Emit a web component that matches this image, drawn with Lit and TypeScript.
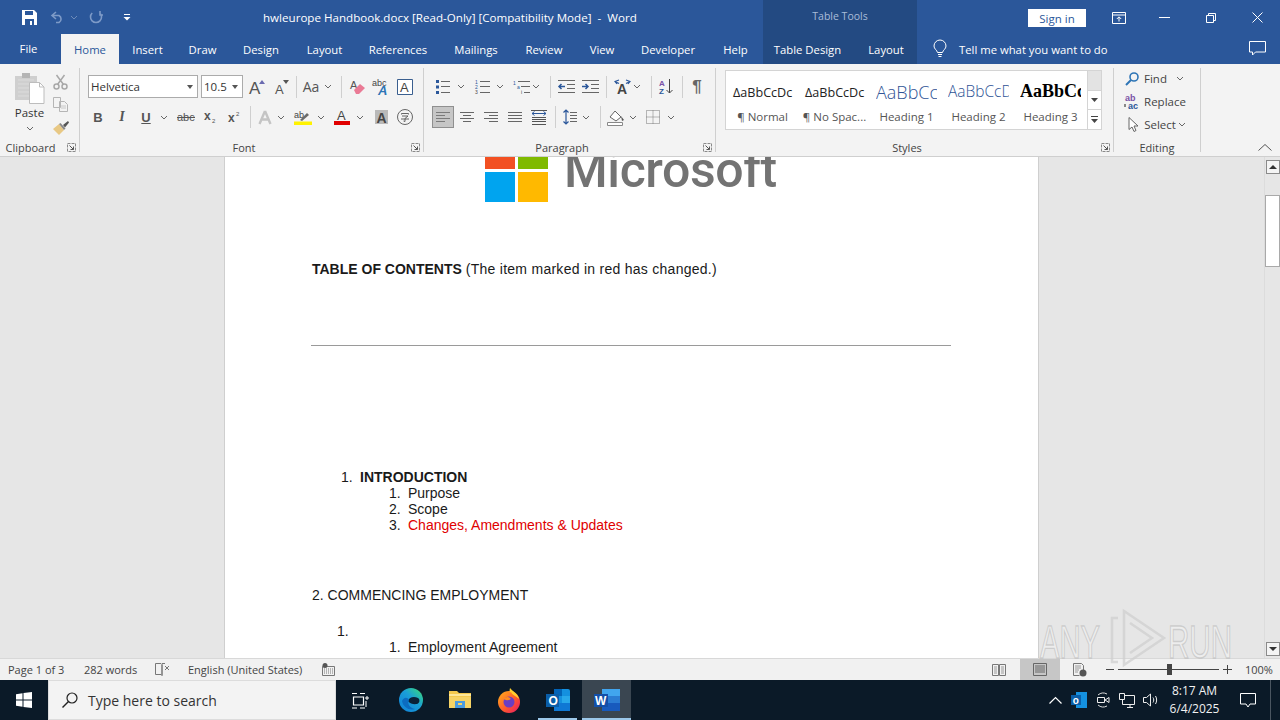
import { LitElement, html, css, svg } from 'lit'
import { customElement } from 'lit/decorators.js'

// small svg helpers, icons are drawn in pixel coordinates
const ic = (w: number, h: number, body: unknown) =>
  html`<svg width=${w} height=${h} viewBox="0 0 ${w} ${h}" fill="none">${body}</svg>`

const label = (x: number, y: number, text: string, size: number, fill: string, extra = '') =>
  svg`<text x=${x} y=${y} font-size=${size} fill=${fill} style=${extra} font-family="Liberation Sans, sans-serif">${text}</text>`

const chev = ic(8, 5, svg`<path d="M1 1l3 3 3-3" stroke="#666" stroke-width="1"/>`)
const chevDim = ic(8, 5, svg`<path d="M1 1l3 3 3-3" stroke="#6d8bb9" stroke-width="1"/>`)
const sep = html`<i class="vsep"></i>`

const hlines = (ys: [number, number, number][], color = '#666') =>
  ys.map(([x1, x2, y]) => svg`<path d="M${x1} ${y + 0.5}H${x2}" stroke=${color}/>`)

// paste a row of tools: each item gives its centre x, its width and its content
type Tool = [number, number, unknown]
const row = (x0: number, items: Tool[]) => {
  let x = x0
  return items.map(([cx, w, t]) => {
    const left = cx - w / 2
    const m = left - x
    x = left + w
    return html`<span class="t" style="width:${w}px;margin-left:${m}px">${t}</span>`
  })
}

const launcher = ic(9, 9, svg`<path d="M.5 .5h8v8h-8z" stroke="#8a8a8a" stroke-dasharray="3 1"/><path d="M2.5 2.5l4 4M6.5 3.5v3h-3" stroke="#555"/>`)

// title bar
const saveIcon = ic(15, 15, svg`<path d="M0 0h12l3 3v12H0z" fill="#fff"/><path d="M3 1h8v4H3zM3 9h9v6H3z" fill="#2b579a"/><path d="M8 11h2v4H8z" fill="#fff"/>`)
const undoIcon = ic(14, 12, svg`<path d="M5 1L1 4.5 5 8M1.5 4.5H8a4 4 0 0 1 0 7H5" stroke="#7d9ac7" stroke-width="1.6"/>`)
const redoIcon = ic(14, 14, svg`<path d="M3.2 3a5.5 5.5 0 1 0 7.600 0M11 1v4H14" stroke="#7d9ac7" stroke-width="1.6"/>`)
const qatIcon = ic(8, 8, svg`<path d="M1 1.500h6" stroke="#fff"/><path d="M.5 4h7L4 7.500z" fill="#fff"/>`)
const displayIcon = ic(14, 12, svg`<path d="M.5 .5h13v11H.5zM.5 3h13" stroke="#fff"/><path d="M7 9.500V5M4.800 7L7 4.800 9.200 7" stroke="#fff"/>`)
const minIcon = ic(11, 1, svg`<path d="M0 .5h11" stroke="#fff"/>`)
const restoreIcon = ic(10, 10, svg`<path d="M.5 2.500h7v7h-7zM2.500 2.500v-2h7v7h-2" stroke="#fff"/>`)
const closeIcon = ic(11, 11, svg`<path d="M.5 .5l10 10M10.500 .5l-10 10" stroke="#fff"/>`)
const bulbIcon = ic(14, 18, svg`<path d="M4.500 12.500C4 10 1 9 1 6a6 6 0 0 1 12 0c0 3-3 4-3.500 6.500zM5 14.500h4M5.500 16.500h3" stroke="#fff"/>`)
const commentIcon = ic(17, 15, svg`<path d="M.5 .5h16v10.500h-10l-3 3v-3h-3z" stroke="#fff"/>`)

// clipboard
const pasteIcon = ic(30, 32, svg`
  <path d="M0 4h22v24H0z" fill="#cfcfcf"/><path d="M7 1h8v5H7z" fill="#b5b5b5"/>
  <path d="M3 8h16M3 12h16M3 16h16M3 20h16M3 24h16" stroke="#dcdcdc"/>
  <path d="M14.500 10.500h10l4.500 4.500v16.500H14.500z" fill="#fff" stroke="#bdbdbd"/>
  <path d="M24.500 10.500v4.500h4.500" stroke="#bdbdbd"/>`)
const cutIcon = ic(15, 16, svg`<path d="M3.500 1l7 9.500M11.500 1l-7 9.500" stroke="#a8a8a8" stroke-width="1.500"/><circle cx="3.500" cy="12.500" r="2.500" stroke="#a8a8a8" stroke-width="1.500"/><circle cx="11.500" cy="12.500" r="2.500" stroke="#a8a8a8" stroke-width="1.500"/>`)
const copyIcon = ic(15, 15, svg`<path d="M.5 .5h7v10h-7zM6.500 4.500h5l3 3v7h-8z" fill="#f3f3f3" stroke="#b5b5b5"/><path d="M8 9h5M8 11h5" stroke="#c8c8c8"/>`)
const brushIcon = ic(16, 15, svg`<path d="M0 9l6-5 5 6-5 5z" fill="#e8c884"/><path d="M6 4l5 6 1.500-1.500L7.500 3z" fill="#888"/><path d="M10 5l5-4 1 1.500-4 5z" fill="#555"/>`)

// font
const growIcon = ic(18, 17, svg`${label(0, 16, 'A', 17, '#555')}<path d="M10 6l3-4 3 4z" fill="#6a6ab0"/>`)
const shrinkIcon = ic(18, 17, svg`${label(2, 16, 'A', 13, '#555')}<path d="M10 2h6l-3 4z" fill="#555"/>`)
const caseIcon = html`<span class="glyph case">Aa</span>`
const clearIcon = ic(17, 16, svg`${label(1, 10, 'A', 11, '#555')}<path d="M5 11l6-6 5 4-6 6H7z" fill="#ea7a95"/>`)
const effectIcon = ic(18, 18, svg`${label(0, 8, 'abc', 9, '#444')}${label(6, 17, 'A', 13, '#2e75b6', 'font-weight:700;font-style:italic')}`)
const boxAIcon = ic(16, 16, svg`<path d="M.5 .5h15v15H.5z" stroke="#3a5f8f" fill="#fff"/>${label(3, 13, 'A', 13, '#444')}`)
const strikeIcon = ic(18, 12, svg`${label(0, 10, 'abc', 11, '#555')}<path d="M0 6.500h18" stroke="#555"/>`)
const subIcon = ic(13, 12, svg`${label(0, 9, 'x', 12, '#555', 'font-weight:700')}${label(8, 12, '2', 6, '#555')}`)
const supIcon = ic(13, 12, svg`${label(0, 11, 'x', 12, '#555', 'font-weight:700')}${label(8, 5, '2', 6, '#555')}`)
const fxIcon = ic(14, 15, svg`<path d="M7 1L1.500 14M7 1l5.500 13M4 9.500h6" stroke="#c4c4c4" stroke-width="2.400"/>`)
const markIcon = ic(18, 16, svg`${label(0, 9, 'ab', 9, '#444')}<path d="M6 11l7-7 2 2-7 6z" fill="#6a6a6a"/><path d="M0 12.500h18v3.500H0z" fill="#fff200"/>`)
const colorIcon = ic(16, 16, svg`${label(3, 11, 'A', 13, '#444')}<path d="M0 12h16v4H0z" fill="#e00000"/>`)
const shadeIcon = ic(13, 14, svg`<path d="M0 0h13v14H0z" fill="#b9b9b9"/>${label(1.500, 12.500, 'A', 14, '#444', 'font-weight:700')}`)
const phoneticIcon = ic(16, 16, svg`<circle cx="8" cy="8" r="7.500" stroke="#666"/><path d="M4.500 5.500V4.500h7v1M5 7h6L8 9.500v3l-1.500-.5M4 10h8" stroke="#555" stroke-width=".9"/>`)

// paragraph
const bulletsIcon = ic(14, 14, svg`<path d="M0 0h3v3H0zM0 5.500h3v3H0zM0 11h3v3H0z" fill="#2b579a"/>${hlines([[5, 14, 1], [5, 14, 6], [5, 14, 12]])}`)
const numberIcon = ic(15, 14, svg`${label(0, 4, '1', 5, '#2b579a')}${label(0, 9, '2', 5, '#2b579a')}${label(0, 14, '3', 5, '#444')}${hlines([[5, 15, 1], [5, 15, 6], [5, 15, 12]])}`)
const multiIcon = ic(17, 14, svg`${label(0, 5, '1', 5, '#2b579a')}${label(4, 9, 'a', 5, '#2b579a')}${label(8, 14, 'i', 5, '#444')}${hlines([[5, 17, 1], [8, 17, 6], [11, 17, 12]])}`)
const outdentIcon = ic(17, 13, svg`${hlines([[0, 17, 0], [9, 17, 4], [9, 17, 8], [0, 17, 12]])}<path d="M7 6.500H1M3.500 4L1 6.500 3.500 9" stroke="#2b579a" stroke-width="1.500"/>`)
const indentIcon = ic(17, 13, svg`${hlines([[0, 17, 0], [9, 17, 4], [9, 17, 8], [0, 17, 12]])}<path d="M0 6.500h6M3.500 4L6 6.500 3.500 9" stroke="#2b579a" stroke-width="1.500"/>`)
const dirIcon = ic(17, 15, svg`${label(3, 15, 'A', 14, '#444', 'font-weight:700')}<path d="M1 2.500l4 2M5 1l-4 1.500 2 2.500M16 2.500l-4 2M12 1l4 1.500-2 2.500" stroke="#2b579a" stroke-width="1.200"/>`)
const sortIcon = ic(14, 15, svg`${label(0, 7, 'A', 8, '#7a52a6', 'font-weight:700')}${label(0, 15, 'Z', 8, '#2b579a', 'font-weight:700')}<path d="M10.500 0v14M7.500 11l3 3 3-3" stroke="#444"/>`)
const pilcrowIcon = html`<span class="glyph pil">¶</span>`
const alignLeft = ic(14, 10, hlines([[0, 14, 0], [0, 9, 3], [0, 14, 6], [0, 9, 9]], '#7b7b7b'))
const alignCenter = ic(14, 10, hlines([[0, 14, 0], [3, 11, 3], [0, 14, 6], [3, 11, 9]]))
const alignRight = ic(14, 10, hlines([[0, 14, 0], [5, 14, 3], [0, 14, 6], [5, 14, 9]]))
const alignJust = ic(14, 10, hlines([[0, 14, 0], [0, 14, 3], [0, 14, 6], [0, 14, 9]]))
const distIcon = ic(16, 15, svg`${hlines([[0, 16, 0], [1, 15, 7], [1, 15, 9], [1, 15, 11], [1, 15, 14]], '#555')}<path d="M1 3.500h14M3.500 1.500L1 3.500l2.500 2M12.500 1.500l2.500 2-2.500 2" stroke="#2b579a"/>`)
const spacingIcon = ic(14, 16, svg`<path d="M3 1v14M.5 3.500L3 1l2.500 2.500M.5 12.500L3 15l2.500-2.500" stroke="#2b579a" stroke-width="1.200"/>${hlines([[7, 14, 3], [7, 14, 6], [7, 14, 9], [7, 14, 12]])}`)
const fillIcon = ic(18, 17, svg`<path d="M3 8l5-6 6 6-5 4z" fill="#fff" stroke="#666"/><path d="M14 7l3 4-2 1z" fill="#555"/><path d="M.5 13.500h15v3H.5z" fill="#fff" stroke="#888"/>`)
const borderIcon = ic(14, 14, svg`<path d="M.5 .5h13v13H.5zM7 .5v13M.5 7h13" stroke="#777" stroke-dasharray="1 1"/>`)

// editing
const findIcon = ic(14, 14, svg`<circle cx="9" cy="5" r="4" stroke="#2e75b6" stroke-width="1.600"/><path d="M6 8l-5 5" stroke="#2e75b6" stroke-width="2"/>`)
const replaceIcon = ic(16, 16, svg`${label(1, 7, 'ab', 9, '#7a52a6', 'font-weight:700')}${label(4, 15, 'ac', 9, '#2b579a', 'font-weight:700')}<path d="M0 10h2v3H0z" fill="#888"/>`)
const selectIcon = ic(11, 15, svg`<path d="M1 .5v12l3-2.500 2 4.500 2-1-2-4.500h4z" fill="#fff" stroke="#666"/>`)

// status bar
const bookXIcon = ic(15, 13, svg`<path d="M.5 .5h5.500l1 1v11l-1-1H.5zM7 1.500v11M10 .5h-3" stroke="#777"/><path d="M10 3l4 4M14 3l-4 4" stroke="#777"/>`)
const macroIcon = ic(13, 13, svg`<path d="M.5 3.500h12v9H.5z" stroke="#777"/><path d="M2 6h9M2 8h9M2 10h9" stroke="#777" stroke-dasharray="1 1"/><circle cx="3" cy="2.500" r="2.500" fill="#555"/>`)
const readIcon = ic(14, 12, svg`<path d="M.5 .5h6v11h-6zM7.500 .5h6v11h-6z" stroke="#777"/><path d="M2 3h3M2 5h3M2 7h3M2 9h3M9 3h3M9 5h3M9 7h3M9 9h3" stroke="#999"/>`)
const printIcon = ic(14, 13, svg`<path d="M.5 .5h13v12H.5z" stroke="#666"/><path d="M2 3h10M2 5h10M2 7h10M2 9h10" stroke="#666"/>`)
const webIcon = ic(14, 14, svg`<path d="M.5 .5h8l2 2v6M.5 .5v12h6" stroke="#777"/><path d="M2 3h6M2 5h6M2 7h4M2 9h3" stroke="#999"/><circle cx="10" cy="10" r="3.500" fill="#555"/>`)

// taskbar
const winIcon = ic(16, 16, svg`<path d="M0 2.300L6.500 1.300V7.500H0zM7.500 1.100L16 0V7.500H7.500zM0 8.500H6.500V14.700L0 13.700zM7.500 8.500H16V16L7.500 14.900z" fill="#fff"/>`)
const searchIcon = ic(16, 16, svg`<circle cx="10" cy="6" r="5" stroke="#222" stroke-width="1.200"/><path d="M6.500 9.500L.5 15.500" stroke="#222" stroke-width="1.400"/>`)
const taskViewIcon = ic(16, 17, svg`<path d="M1.500 5h10v8h-10z" stroke="#fff" stroke-width="1.200"/><path d="M0 1.500h5M8 1.500h5M0 16h5M8 16h5" stroke="#fff"/><path d="M14 5h2v2h-2zM14 9v6" stroke="#fff"/>`)
const edgeIcon = ic(24, 24, svg`
  <defs><linearGradient id="ed" x1="0" y1="1" x2="1" y2="0"><stop offset="0" stop-color="#0f7fd6"/><stop offset=".55" stop-color="#1a9ed8"/><stop offset=".8" stop-color="#2cc3a0"/><stop offset="1" stop-color="#5ed24a"/></linearGradient></defs>
  <circle cx="12" cy="12" r="12" fill="url(#ed)"/>
  <path d="M9 13c1-4 6-5 10-3 2 1 2 5-1 6-3 .5-7 0-9-3z" fill="#0a2238"/>
  <path d="M10 12c-2 3 0 8 6 9-6 2-12-2-13-8 1-3 5-5 7-1z" fill="#0c6cc0"/>`)
const folderIcon = ic(22, 20, svg`<path d="M0 1h8l2 2h12v15H0z" fill="#f4c94e"/><path d="M0 4h22v2H0z" fill="#fde79a"/><path d="M0 7h22v11H0z" fill="#f6d365"/><path d="M6 11h10v7H6z" fill="#4a9be0"/><path d="M9 13h4v2H9z" fill="#f6d365"/>`)
const firefoxIcon = ic(24, 25, svg`
  <defs><linearGradient id="ff" x1="0" y1="0" x2="1" y2="1"><stop offset="0" stop-color="#ffb31a"/><stop offset=".55" stop-color="#ff5a2b"/><stop offset="1" stop-color="#e3156a"/></linearGradient></defs>
  <circle cx="12" cy="14" r="11" fill="url(#ff)"/>
  <path d="M13 0c2 3 8 5 9 11-3-3-7-4-8-7-1 1-2 0-1-4z" fill="#ffce2e"/>
  <circle cx="12" cy="14" r="5.500" fill="#6a3ec2"/>
  <path d="M6 11c2-2 5-3 7-1 2 1-2 3-4 2z" fill="#ff8a1f"/>`)
const outlookIcon = ic(24, 22, svg`
  <path d="M8 0h14a2 2 0 0 1 2 2v18a2 2 0 0 1-2 2H8z" fill="#1490df"/><path d="M8 0h8v7H8z" fill="#0364b8"/><path d="M16 7h8v7h-8z" fill="#28a8ea"/><path d="M8 14h16v8H8z" fill="#0f78d4"/>
  <path d="M0 5h13v13H0z" fill="#0a5ea8"/>${label(2.500, 16, 'O', 12, '#fff', 'font-weight:700')}`)
const wordIcon = ic(26, 22, svg`
  <path d="M8 0h16a2 2 0 0 1 2 2v18a2 2 0 0 1-2 2H8z" fill="#2b7cd3"/><path d="M8 0h18v7H8z" fill="#41a5ee"/><path d="M8 14h18v8H8z" fill="#185abd"/>
  <path d="M0 5h14v13H0z" fill="#134fa8"/>${label(1, 16, 'W', 12, '#fff', 'font-weight:700')}`)
const upIcon = ic(13, 7, svg`<path d="M.5 6.500L6.500 .5l6 6" stroke="#fff" stroke-width="1.200"/>`)
const trayOutlook = ic(16, 16, svg`<path d="M5 0h11v16H5z" fill="#1490df"/><path d="M0 3h10v10H0z" fill="#0a5ea8"/>${label(1.800, 11.500, 'o', 10, '#fff', 'font-weight:700')}`)
const meetIcon = ic(13, 16, svg`<path d="M1 3a8 8 0 0 1 9-1M1 13a8 8 0 0 0 9 1" stroke="#ddd"/><path d="M.5 5.500h7v5h-7zM8 8l4-2.500v5z" stroke="#eee"/>`)
const netIcon = ic(16, 15, svg`<path d="M3.500 2.500h12v9h-12zM8 14.500h6M11 12v2" stroke="#eee"/><path d="M.5 .5h5v6h-5z" fill="#0b1a28" stroke="#eee"/>`)
const soundIcon = ic(16, 14, svg`<path d="M.5 4.500h3L7.500 1v12l-4-3.500h-3z" stroke="#eee"/><path d="M10 4.500c1 1.500 1 3.500 0 5M12.500 3c1.500 2.500 1.500 5.500 0 8" stroke="#eee"/>`)
const noteIcon = ic(16, 15, svg`<path d="M.5 .5h15v10.500H10l-2 3-2-3H.5z" stroke="#fff"/>`)

const tabs: [string, number][] = [
  ['Home', 58], ['Insert', 57], ['Draw', 53], ['Design', 64], ['Layout', 63], ['References', 84],
  ['Mailings', 72], ['Review', 64], ['View', 52], ['Developer', 80], ['Help', 55],
]

const gallery = [
  { name: '¶ Normal', sample: 'ΔaBbCcDc', cls: 'normal' },
  { name: '¶ No Spac...', sample: 'ΔaBbCcDc', cls: 'normal' },
  { name: 'Heading 1', sample: 'AaBbCc', cls: 'h1' },
  { name: 'Heading 2', sample: 'AaBbCcD', cls: 'h2' },
  { name: 'Heading 3', sample: 'AaBbCc', cls: 'h3' },
]

@customElement('app-root')
export class AppRoot extends LitElement {
  renderTitle() {
    return html`
      <div class="titlebar">
        <div class="qat">${row(0, [[29, 24, saveIcon], [58, 20, undoIcon], [74, 8, chevDim], [96, 20, redoIcon], [127, 16, qatIcon]])}</div>
        <div class="doc-title">hwleurope Handbook.docx [Read-Only] [Compatibility Mode]  -  Word</div>
        <div class="context">Table Tools</div>
        <div class="win">
          <span class="signin">Sign in</span>
          ${row(1086, [[1119, 30, displayIcon], [1164, 30, minIcon], [1211, 30, restoreIcon], [1257, 30, closeIcon]])}
        </div>
      </div>`
  }

  renderTabs() {
    return html`
      <div class="tabs">
        <span class="tab file">File</span>
        ${tabs.map(([n, w], i) => html`<span class="tab ${i === 0 ? 'active' : ''}" style="width:${w}px">${n}</span>`)}
        <span class="tab ctx wide">Table Design</span>
        <span class="tab ctx">Layout</span>
        <span class="tell">${bulbIcon}<span>Tell me what you want to do</span></span>
        <span class="comment">${commentIcon}</span>
      </div>`
  }

  renderRibbon() {
    return html`
      <div class="ribbon">
        <section class="group clip">
          <div class="paste">
            <div class="paste-btn">${pasteIcon}<span>Paste</span>${chev}</div>
            <div class="clip-tools"><span>${cutIcon}</span><span>${copyIcon}</span><span>${brushIcon}</span></div>
          </div>
          <div class="name">Clipboard<b>${launcher}</b></div>
        </section>

        <section class="group font">
          <div class="rows">
            <div class="r one">
              <span class="combo face">Helvetica<em></em></span>
              <span class="combo size">10.5<em></em></span>
              ${row(243, [
                [258, 20, growIcon], [282, 20, shrinkIcon], [296, 1, sep], [311, 22, caseIcon], [328, 8, chev], [341, 1, sep],
                [357, 20, clearIcon], [381, 20, effectIcon], [405, 20, boxAIcon],
              ])}
            </div>
            <div class="r two">
              ${row(80, [
                [98, 20, html`<span class="glyph b">B</span>`], [122, 20, html`<span class="glyph i">I</span>`], [146, 20, html`<span class="glyph u">U</span>`],
                [164, 8, chev], [186, 20, strikeIcon], [210, 20, subIcon], [234, 20, supIcon], [250, 1, sep],
                [265, 16, fxIcon], [281, 8, chev], [303, 20, markIcon], [321, 8, chev], [342, 18, colorIcon], [360, 8, chev],
                [381, 16, shadeIcon], [405, 18, phoneticIcon],
              ])}
            </div>
          </div>
          <div class="name">Font<b>${launcher}</b></div>
        </section>

        <section class="group para">
          <div class="rows">
            <div class="r one">
              ${row(424, [
                [443, 16, bulletsIcon], [460.500, 8, chev], [482, 16, numberIcon], [500, 8, chev], [521, 18, multiIcon], [536, 8, chev], [550, 1, sep],
                [566, 18, outdentIcon], [590, 18, indentIcon], [606, 1, sep], [622, 18, dirIcon], [637, 8, chev], [651, 1, sep],
                [666, 16, sortIcon], [682, 1, sep], [697, 14, pilcrowIcon],
              ])}
            </div>
            <div class="r two">
              ${row(424, [
                [443, 22, html`<span class="on">${alignLeft}</span>`], [467, 16, alignCenter], [491, 16, alignRight], [515, 16, alignJust], [539, 18, distIcon], [555, 1, sep],
                [570, 16, spacingIcon], [586, 8, chev], [600, 1, sep], [616, 20, fillIcon], [633, 8, chev], [653, 16, borderIcon], [671, 8, chev],
              ])}
            </div>
          </div>
          <div class="name">Paragraph<b>${launcher}</b></div>
        </section>

        <section class="group styles">
          <div class="gallery">
            ${gallery.map(g => html`
              <div class="style">
                <div class="sample ${g.cls}">${g.sample}</div>
                <div class="style-name">${g.name}</div>
              </div>`)}
            <div class="more">
              <span class="up"></span>
              <span>${ic(7, 4, svg`<path d="M0 0h7L3.500 4z" fill="#444"/>`)}</span>
              <span>${ic(7, 7, svg`<path d="M0 .5h7" stroke="#444"/><path d="M0 3h7L3.500 7z" fill="#444"/>`)}</span>
            </div>
          </div>
          <div class="name">Styles<b>${launcher}</b></div>
        </section>

        <section class="group edit">
          <div class="edit-list">
            <div>${row(1114, [[1132, 18, findIcon], [1155.500, 26, html`<span class="txt">Find</span>`], [1180, 8, chev]])}</div>
            <div>${row(1114, [[1132, 18, replaceIcon], [1165, 42, html`<span class="txt">Replace</span>`]])}</div>
            <div>${row(1114, [[1133, 18, selectIcon], [1160, 34, html`<span class="txt">Select</span>`], [1182, 8, chev]])}</div>
          </div>
          <div class="name">Editing</div>
        </section>
        <span class="collapse">${ic(14, 7, svg`<path d="M.5 6.500L7 .5l6.500 6" stroke="#555"/>`)}</span>
      </div>`
  }

  renderPage() {
    return html`
      <div class="canvas">
        <article class="page">
          <div class="logo">
            <div class="squares"><i class="red"></i><i class="green"></i><i class="blue"></i><i class="yellow"></i></div>
            <span class="wordmark">Microsoft</span>
          </div>
          <p class="toc"><strong>TABLE OF CONTENTS</strong> <span>(The item marked in red has changed.)</span></p>
          <hr />
          <div class="li one first"><span>1.</span><strong>INTRODUCTION</strong></div>
          <div class="li two"><span>1.</span>Purpose</div>
          <div class="li two"><span>2.</span>Scope</div>
          <div class="li two"><span>3.</span><b class="red-text">Changes, Amendments &amp; Updates</b></div>
          <div class="li head">2. COMMENCING EMPLOYMENT</div>
          <div class="li lone"><span>1.</span></div>
          <div class="li two"><span>1.</span>Employment Agreement</div>
        </article>
      </div>
      <div class="scroll">
        <span class="arrow">${ic(8, 4, svg`<path d="M4 0l4 4H0z" fill="#333"/>`)}</span>
        <span class="thumb"></span>
        <span class="arrow end">${ic(8, 4, svg`<path d="M0 0h8L4 4z" fill="#333"/>`)}</span>
      </div>`
  }

  renderStatus() {
    return html`
      <div class="status">
        <span class="pg">Page 1 of 3</span>
        <span class="wc">282 words</span>
        <span class="bk">${bookXIcon}</span>
        <span class="lang">English (United States)</span>
        <span class="mc">${macroIcon}</span>
        <div class="views">
          ${row(335, [[999, 22, readIcon], [1040, 40, html`<span class="view-on">${printIcon}</span>`], [1080, 22, webIcon]])}
          <span class="zoom-minus"></span>
          <span class="slider"><i></i></span>
          <span class="zoom-plus"></span>
          <span class="pct">100%</span>
        </div>
      </div>`
  }

  renderTaskbar() {
    return html`
      <div class="taskbar">
        <span class="start">${winIcon}</span>
        <div class="search">${searchIcon}<span>Type here to search</span></div>
        <span class="task tv">${taskViewIcon}</span>
        <span class="task">${edgeIcon}</span>
        <span class="task">${folderIcon}</span>
        <span class="task">${firefoxIcon}</span>
        <span class="task run">${outlookIcon}</span>
        <span class="task run current">${wordIcon}</span>
        <div class="tray">
          <span>${upIcon}</span><span>${trayOutlook}</span><span>${meetIcon}</span><span>${netIcon}</span><span>${soundIcon}</span>
          <div class="clock"><div>8:17 AM</div><div>6/4/2025</div></div>
          <span class="note">${noteIcon}</span>
          <span class="desk"></span>
        </div>
      </div>`
  }

  render() {
    return html`
      ${this.renderTitle()}
      ${this.renderTabs()}
      ${this.renderRibbon()}
      <div class="docarea">${this.renderPage()}</div>
      ${this.renderStatus()}
      ${this.renderTaskbar()}
      <svg class="watermark" width="192" height="62" viewBox="0 0 192 62">
        <g stroke="#b4b4b4" stroke-opacity=".55" stroke-width="1.400" fill="#fff" fill-opacity=".3" font-family="Liberation Sans, sans-serif" font-size="46">
          <text x="0" y="50" textLength="60" lengthAdjust="spacingAndGlyphs">ANY</text>
          <text x="128" y="50" textLength="64" lengthAdjust="spacingAndGlyphs">RUN</text>
        </g>
        <path d="M78 10h-6v44h6M84 3l40 27-40 27zM90 15l22 15-22 15" fill="none" stroke="#cfcfcf" stroke-opacity=".75" stroke-width="2.500"/>
      </svg>
    `
  }

  static styles = css`
    :host {
      display: block;
      position: relative;
      width: 1280px;
      height: 720px;
      overflow: hidden;
      font-family: 'Open Sans', 'Noto Sans', sans-serif;
      font-size: 11.5px;
      color: #444;
      background: #e6e6e6;
    }
    i, em { font-style: normal; }
    svg { overflow: visible; }
    .t { display: inline-flex; align-items: center; justify-content: center; flex: none; height: 100%; }
    .vsep { display: block; width: 1px; height: 22px; background: #cfcfcf; }

    .titlebar { display: grid; grid-template-columns: 263px 500px 154px 1fr; height: 34px; background: #2b579a; color: #fff; }
    .qat { display: flex; align-items: center; height: 34px; }
    .doc-title { line-height: 35px; font-size: 11.6px; white-space: pre; }
    .context { background: #234a82; color: #a9bcd8; text-align: center; font-size: 10.5px; line-height: 33px; }
    .win { display: flex; align-items: center; position: relative; }
    .signin { margin-left: 111px; width: 58px; height: 18px; background: #fff; color: #2b579a; text-align: center; line-height: 19px; flex: none; font-size: 11.5px; }
    .win .t { height: 30px; }

    .tabs { display: flex; height: 30px; background: #2b579a; color: #fff; line-height: 31px; font-size: 11.3px; }
    .tab { display: block; text-align: center; flex: none; width: 63px; }
    .tab.file { width: 61px; padding-right: 4px; box-sizing: border-box; line-height: 29px; }
    .tab.active { background: #f3f3f3; color: #2b579a; }
    .tab.ctx { width: 62px; background: #234a82; }
    .tab.ctx.wide { width: 92px; padding-right: 3px; box-sizing: border-box; }
    .tell { display: flex; align-items: center; gap: 12px; margin-left: 16px; height: 30px; width: 316px; }
    .comment { display: flex; align-items: center; height: 28px; }

    .ribbon { display: flex; height: 93px; box-sizing: border-box; background: #f3f3f3; border-bottom: 1px solid #cfcfcf; position: relative; }
    .group { position: relative; margin-top: 4px; height: 84px; box-sizing: border-box; border-right: 1px solid #cfcfcf; flex: none; }
    .group.clip { width: 80px; }
    .group.font { width: 344px; }
    .group.para { width: 292px; }
    .group.styles { width: 398px; }
    .group.edit { width: 87px; }
    .name { position: absolute; left: 0; right: 0; top: 72px; height: 16px; line-height: 16px; text-align: center; font-size: 11px; color: #444; }
    .name b { position: absolute; right: 3px; top: 3px; line-height: 0; font-weight: 400; }
    .group.clip .name { padding-right: 18px; box-sizing: border-box; }
    .group.font .name, .group.para .name, .group.styles .name { padding-right: 15px; box-sizing: border-box; }
    .rows { display: flex; flex-direction: column; gap: 8px; padding-top: 7px; }
    .r { display: flex; height: 23px; align-items: center; }
    .r.one { height: 23px; }
    .r.two { height: 22px; }
    .combo { position: relative; display: block; flex: none; height: 23px; box-sizing: border-box; border: 1px solid #ababab; background: #fff; padding-left: 2px; line-height: 21px; font-size: 11.5px; color: #333; }
    .combo em { position: absolute; right: 4px; top: 9px; border: 3px solid transparent; border-top: 4px solid #555; border-bottom: 0; }
    .combo.face { width: 110px; margin-left: 8px; }
    .combo.size { width: 42px; margin-left: 3px; }
    .glyph { font-family: 'Liberation Sans', sans-serif; color: #555; line-height: 1; }
    .glyph.case { font-family: 'Open Sans', sans-serif; font-size: 14px; }
    .glyph.b { font-weight: 700; font-size: 13px; }
    .glyph.i { font-family: 'Liberation Serif', serif; font-style: italic; font-size: 14px; font-weight: 700; }
    .glyph.u { font-weight: 700; font-size: 13px; text-decoration: underline; }
    .glyph.pil { font-size: 17px; color: #666; font-weight: 700; }
    .on { display: flex; align-items: center; justify-content: center; width: 22px; height: 22px; box-sizing: border-box; background: #c6c6c6; border: 1px solid #8f8f8f; }

    .paste { display: flex; height: 72px; }
    .paste-btn { display: flex; flex-direction: column; align-items: center; width: 47px; padding: 4px 0 0 12px; box-sizing: border-box; font-size: 11.5px; color: #333; }
    .paste-btn span { line-height: 16px; margin-top: 1px; }
    .paste-btn svg:last-child { margin-top: 5px; }
    .clip-tools { display: flex; flex-direction: column; margin-left: 6px; padding-top: 2px; }
    .clip-tools span { display: flex; height: 23px; align-items: center; }

    .gallery { display: flex; margin: 2px 0 0 9px; width: 377px; height: 60px; box-sizing: border-box; background: #fff; border: 1px solid #d4d4d4; position: relative; }
    .style { width: 72px; flex: none; text-align: center; padding-left: 1px; box-sizing: border-box; overflow: hidden; }
    .sample { height: 29px; line-height: 44px; white-space: nowrap; overflow: hidden; margin: 0 5px; color: #222; }
    .sample.normal { font-size: 12.6px; font-family: 'Open Sans', sans-serif; text-align: left; padding-left: 1px; }
    .sample.h1 { font-size: 18px; color: #2f5496; font-weight: 300; text-align: left; line-height: 42px; }
    .sample.h2 { font-size: 15.5px; color: #2f5496; font-weight: 300; text-align: left; line-height: 40px; }
    .sample.h3 { font-size: 18px; color: #000; font-weight: 700; font-family: 'Liberation Serif', serif; text-align: left; line-height: 40px; }
    .style-name { line-height: 14px; margin-top: 10px; font-size: 11.5px; color: #555; white-space: nowrap; }
    .more { position: absolute; right: 0; top: 0; bottom: 0; width: 13px; display: flex; flex-direction: column; border-left: 1px solid #d4d4d4; }
    .more span { flex: 1; display: flex; align-items: center; justify-content: center; border-bottom: 1px solid #d4d4d4; background: #fff; }
    .more span:last-child { border-bottom: 0; }
    .more .up { background: #e3e3e3; }

    .edit-list { display: flex; flex-direction: column; margin-top: -1px; }
    .edit-list div { display: flex; height: 23px; align-items: center; }
    .edit-list .txt { white-space: nowrap; font-size: 11.5px; color: #444; }
    .collapse { position: absolute; right: 8px; top: 80px; line-height: 0; }

    .docarea { display: flex; height: 501px; background: #e6e6e6; }
    .canvas { flex: 1; overflow: hidden; }
    .page { width: 815px; height: 640px; margin: -18px 0 0 224px; padding-left: 87px; box-sizing: border-box; background: #fff; border-left: 1px solid #cfcfcf; border-right: 1px solid #cfcfcf; font-family: 'Liberation Sans', sans-serif; font-size: 14px; line-height: 16px; color: #1a1a1a; }
    .logo { display: flex; align-items: flex-start; height: 62px; margin-left: 173px; }
    .squares { display: grid; grid-template-columns: 30px 30px; grid-auto-rows: 30px; gap: 3px; }
    .squares .red { background: #f25022; }
    .squares .green { background: #7fba00; }
    .squares .blue { background: #00a4ef; }
    .squares .yellow { background: #ffb900; }
    .wordmark { margin-left: 16px; font-family: Roboto, 'Open Sans', sans-serif; font-weight: 500; font-size: 50px; line-height: 62px; height: 62px; color: #737373; letter-spacing: -.4px; }
    .toc { margin: 60px 0 0; }
    .toc span { letter-spacing: .27px; }
    hr { margin: 68px 0 0 -1px; width: 640px; height: 1px; border: 0; background: #9a9a9a; }
    .li { display: flex; height: 16px; }
    .li span { display: block; }
    .li.first { margin-top: 123px; }
    .li.one { padding-left: 29px; }
    .li.one span { width: 19px; }
    .li.two { padding-left: 77px; }
    .li.two span { width: 19px; }
    .red-text { color: #e00000; font-weight: 400; }
    .li.head { margin-top: 54px; }
    .li.lone { margin-top: 20px; padding-left: 25px; }

    .scroll { width: 16px; flex: none; background: #e6e6e6; border-left: 1px solid #dcdcdc; box-sizing: border-box; display: flex; flex-direction: column; align-items: center; position: relative; }
    .arrow { display: flex; align-items: center; justify-content: center; width: 14px; height: 14px; margin-top: 3px; box-sizing: border-box; background: #f4f4f4; border: 1px solid #8a8a8a; }
    .arrow.end { margin-top: auto; margin-bottom: 2px; }
    .thumb { width: 15px; height: 72px; margin-top: 21px; box-sizing: border-box; background: #fff; border: 1px solid #a9a9a9; }

    .status { display: flex; height: 22px; background: #f1f1f1; align-items: center; font-size: 11px; color: #444; border-top: 1px solid #d8d8d8; box-sizing: border-box; }
    .pg { margin-left: 8px; width: 76px; flex: none; }
    .wc { width: 71px; flex: none; }
    .bk { width: 33px; flex: none; line-height: 0; }
    .lang { width: 134px; flex: none; }
    .mc { flex: none; line-height: 0; }
    .views { display: flex; align-items: center; height: 21px; flex: 1; }
    .view-on { display: flex; align-items: center; justify-content: center; width: 40px; height: 21px; background: #c6c6c6; }
    .zoom-minus { width: 8px; height: 1px; background: #444; margin-left: 15px; flex: none; }
    .slider { position: relative; width: 101px; height: 1px; background: #444; margin-left: 4px; flex: none; }
    .slider i { position: absolute; left: 49px; top: -5px; width: 5px; height: 11px; background: #444; }
    .zoom-plus { position: relative; width: 9px; height: 1px; background: #444; margin-left: 4px; flex: none; }
    .zoom-plus::after { content: ''; position: absolute; left: 4px; top: -4px; width: 1px; height: 9px; background: #444; }
    .pct { margin-left: 13px; }

    .taskbar { display: flex; height: 40px; background: #0b1a28; color: #fff; }
    .start { display: flex; align-items: center; justify-content: center; width: 48px; flex: none; }
    .search { display: flex; align-items: center; width: 288px; flex: none; box-sizing: border-box; padding-left: 12px; gap: 10px; background: #f3f3f3; border: 1px solid #dcdcdc; color: #333; font-size: 14px; }
    .search svg { margin-left: 1px; }
    .task { position: relative; display: flex; align-items: center; justify-content: center; width: 49px; flex: none; }
    .task.tv { width: 48px; margin-right: 2px; }
    .task.run::after { content: ''; position: absolute; left: 5px; right: 5px; bottom: 0; height: 2px; background: #9cc8ea; }
    .task.current { background: #3a4651; }
    .task.current::after { left: 0; right: 0; }
    .tray { display: flex; align-items: center; margin-left: auto; }
    .tray > span { display: flex; align-items: center; justify-content: center; width: 24px; height: 40px; flex: none; }
    .clock { width: 63px; text-align: center; font-size: 12px; line-height: 18px; color: #f2f2f2; }
    .tray .note { width: 44px; }
    .tray .desk { width: 10px; box-sizing: border-box; border-left: 1px solid #4a5560; height: 40px; }

    .watermark { position: absolute; left: 1040px; top: 608px; pointer-events: none; }
  `
}
